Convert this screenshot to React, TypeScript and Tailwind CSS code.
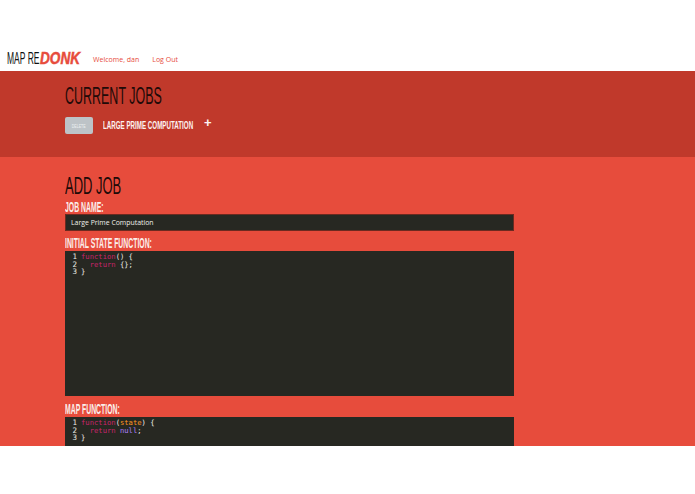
const bebas = "font-['Liberation_Sans',sans-serif] inline-block origin-left whitespace-nowrap";
const mono = "font-['DejaVu_Sans_Mono','Liberation_Mono',monospace] text-[7.2px] leading-[7.5px]";

function Kw({ children }: { children: string }) {
    return <span className="text-[#c9246a]">{children}</span>;
}

function Gutter() {
    return (
        <div className="w-[12px] text-right text-[#e8e8e0] text-[7.5px] leading-[7.5px] font-['DejaVu_Sans_Mono',monospace]">
            <div>1</div>
            <div>2</div>
            <div>3</div>
        </div>
    );
}

function Label({ children }: { children: string }) {
    return (
        <div className="h-[15px] flex items-center">
            <span className={`${bebas} scale-x-[0.49] text-[14px] font-bold leading-[15px] text-[#fbeeea]`}>{children}</span>
        </div>
    );
}

export default function App() {
    return (
        <div className="w-[695px] h-[494px] bg-white overflow-hidden font-['Open_Sans',sans-serif]">
            {/* Шапка */}
            <div className="h-[71px] flex items-end pb-[4px] pl-[7px]">
                <div className="w-[86px] h-[16px] flex items-center">
                    <span className={`${bebas} scale-x-[0.5] text-[17px] leading-[16px] text-[#111] w-[33px] shrink-0`}>MAP RE</span>
                    <span className="inline-block origin-left scale-x-[0.85] font-['Liberation_Sans',sans-serif] text-[16px] leading-[16px] font-bold italic [-webkit-text-stroke:0.5px_#e74c3c] text-[#e74c3c] whitespace-nowrap">DONK</span>
                </div>
                <span className="mb-[1px] text-[7px] leading-[12px] text-[#e74c3c]">Welcome, dan</span>
                <span className="mb-[1px] ml-[13px] text-[7px] leading-[12px] text-[#e74c3c]">Log Out</span>
            </div>

            {/* Поточні задачі */}
            <div className="h-[86px] bg-[#c0392b] pl-[65px] pt-[13px]">
                <div className="h-[24px] flex items-center">
                    <span className={`${bebas} scale-x-[0.52] text-[24px] leading-[24px] text-[#200a08]`}>CURRENT JOBS</span>
                </div>
                <div className="mt-[9px] flex items-start">
                    <button className="w-[28px] h-[17px] rounded-[2px] bg-[#bdc3c7] text-[#ecf0f1] flex items-center justify-center">
                        <span className="font-['Liberation_Sans',sans-serif] text-[6px] leading-[8px] scale-x-[0.6]">DELETE</span>
                    </button>
                    <span className={`ml-[10px] mt-[1px] ${bebas} scale-x-[0.54] text-[11.5px] font-bold leading-[14px] text-[#fdf3f1] w-[89px] shrink-0`}>LARGE PRIME COMPUTATION</span>
                    <span className="ml-[12px] -mt-[1px] font-['Liberation_Sans',sans-serif] font-bold text-[13px] leading-[14px] text-[#fdf3f1]">+</span>
                </div>
            </div>

            {/* Форма */}
            <div className="h-[289px] bg-[#e74c3c] pl-[65px] overflow-hidden">
                <div className="pt-[15px] h-[43px] flex items-center">
                    <span className={`${bebas} scale-x-[0.54] text-[24px] leading-[24px] text-[#200a08]`}>ADD JOB</span>
                </div>
                <Label>JOB NAME:</Label>
                <div className="mt-[-1px] w-[449px] h-[17px] bg-[#272822] border border-[#6b2a20] pl-[5px] pt-[1px] flex items-center text-[6.9px] text-[#f0f0ea]">
                    Large Prime Computation
                </div>
                <div className="mt-[5px]">
                    <Label>INITIAL STATE FUNCTION:</Label>
                </div>
                <div className="w-[449px] h-[145px] bg-[#272822] pt-[2px] flex items-start">
                    <Gutter />
                    <div className={`ml-[4px] ${mono} text-[#f0f0ea] whitespace-pre`}>
                        <div><Kw>function</Kw>() {'{'}</div>
                        <div>  <Kw>return</Kw> {'{}'};</div>
                        <div>{'}'}</div>
                    </div>
                </div>
                <div className="mt-[6px]">
                    <Label>MAP FUNCTION:</Label>
                </div>
                <div className="w-[449px] h-[29px] bg-[#272822] pt-[2px] flex items-start">
                    <Gutter />
                    <div className={`ml-[4px] ${mono} text-[#f0f0ea] whitespace-pre`}>
                        <div><Kw>function</Kw>(<span className="text-[#fd971f]">state</span>) {'{'}</div>
                        <div>  <Kw>return</Kw> <span className="text-[#ae81ff]">null</span>;</div>
                        <div>{'}'}</div>
                    </div>
                </div>
            </div>
        </div>
    );
}
